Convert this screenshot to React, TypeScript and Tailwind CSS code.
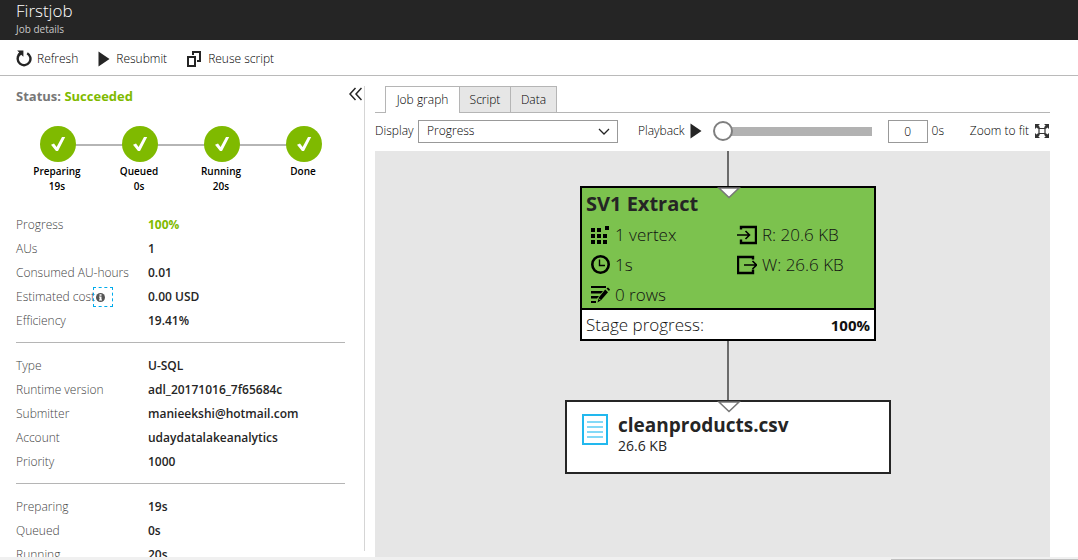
import type { ReactNode } from "react";

type Detail = { label: string; value: string; accent?: boolean; info?: boolean };

const stages = [
  { name: "Preparing", time: "19s" },
  { name: "Queued", time: "0s" },
  { name: "Running", time: "20s" },
  { name: "Done", time: "" },
];

const groups: Detail[][] = [
  [
    { label: "Progress", value: "100%", accent: true },
    { label: "AUs", value: "1" },
    { label: "Consumed AU-hours", value: "0.01" },
    { label: "Estimated cost", value: "0.00 USD", info: true },
    { label: "Efficiency", value: "19.41%" },
  ],
  [
    { label: "Type", value: "U-SQL" },
    { label: "Runtime version", value: "adl_20171016_7f65684c" },
    { label: "Submitter", value: "manieekshi@hotmail.com" },
    { label: "Account", value: "udaydatalakeanalytics" },
    { label: "Priority", value: "1000" },
  ],
  [
    { label: "Preparing", value: "19s" },
    { label: "Queued", value: "0s" },
    { label: "Running", value: "20s" },
  ],
];

function RefreshIcon() {
  return (
    <svg width="16" height="17" viewBox="0 0 16 17" fill="none" aria-hidden="true">
      <path d="M11.2 3.2A6.4 6.4 0 1 1 3.6 4.2" stroke="#252525" strokeWidth="2.4" />
      <path d="M1.2 0.600h6.200v6.200L5.200 4.800 3.200 6.300 1.400 4.600 3.200 2.600z" fill="#252525" />
    </svg>
  );
}

function PlayIcon() {
  return (
    <svg width="12" height="16" viewBox="0 0 12 16" aria-hidden="true">
      <path d="M0.500 0.500 11.500 8 0.500 15.500z" fill="#252525" />
    </svg>
  );
}

function CopyIcon() {
  return (
    <svg width="15" height="16" viewBox="0 0 15 16" fill="none" stroke="#252525" strokeWidth="2" aria-hidden="true">
      <path d="M1 6h7v9H1z" />
      <path d="M6 4V1h7v9h-3" />
    </svg>
  );
}

function FitIcon() {
  return (
    <svg width="14" height="14" viewBox="0 0 14 14" aria-hidden="true">
      <path d="M4 4.500h6v5H4z" fill="none" stroke="#333" strokeWidth="1.200" />
      <path d="M0 0h5L3.400 1.600 5 3.200 3.200 5 1.600 3.400 0 5zM14 0v5l-1.600-1.600L10.800 5 9 3.200l1.600-1.600L9 0zM0 14V9l1.600 1.600L3.200 9 5 10.800l-1.600 1.600L5 14zM14 14H9l1.600-1.600L9 10.800 10.800 9l1.600 1.600L14 9z" fill="#333" />
    </svg>
  );
}

function VertexIcon() {
  return (
    <svg width="20" height="20" viewBox="0 0 20 20" aria-hidden="true">
      <path d="M1 3h4v4H1zM7 3h4v4H7zM15 1h4v4h-4zM1 9h4v4H1zM7 9h4v4H7zM13 9h4v4h-4zM1 15h4v4H1zM7 15h4v4H7zM13 15h4v4h-4z" />
    </svg>
  );
}

function ClockIcon() {
  return (
    <svg width="20" height="20" viewBox="0 0 20 20" fill="none" stroke="#000" aria-hidden="true">
      <circle cx="10.500" cy="9.500" r="8.200" strokeWidth="2.600" />
      <path d="M9.500 4.500v6H15" strokeWidth="1.400" />
    </svg>
  );
}

function RowsIcon() {
  return (
    <svg width="20" height="20" viewBox="0 0 20 20" aria-hidden="true">
      <path d="M1 1h15v2H1zM1 6h12l-2 2.500H1zM1 11h8l-2 2.500H1zM1 16h5v2H1z" />
      <path d="M15.200 4.500 18 7.300 11 15.300 7.500 17.500 8.800 12.500zM16.500 3.500 18 2.500 20 4.500 19 6z" />
      <path d="M8.800 13.500 10.600 15.300" stroke="#7cc24e" />
    </svg>
  );
}

function ReadIcon() {
  return (
    <svg width="20" height="20" viewBox="0 0 20 20" fill="none" stroke="#000" aria-hidden="true">
      <path d="M4 4.500V2h15v16H4v-3.500" strokeWidth="2.400" />
      <path d="M0 10h12M8.500 6l4 4-4 4" strokeWidth="1.600" />
    </svg>
  );
}

function WriteIcon() {
  return (
    <svg width="20" height="20" viewBox="0 0 20 20" fill="none" stroke="#000" aria-hidden="true">
      <path d="M16 4.500V2H1v16h15v-3.500" strokeWidth="2.400" />
      <path d="M7 10h12M15.500 6l4 4-4 4" strokeWidth="1.600" />
    </svg>
  );
}

function FileIcon() {
  return (
    <svg width="26" height="31" viewBox="0 0 26 31" aria-hidden="true">
      <path d="M1 1h24v29H1z" fill="#fff" stroke="#22b8ee" strokeWidth="2" />
      <path d="M5 8h16M5 13h16M5 18h16M5 23h16" stroke="#84d9f7" strokeWidth="2" />
    </svg>
  );
}

function Connector({ className }: { className: string }) {
  return <div className={"w-[2px] bg-[#6b6b6b] " + className} />;
}

function Port() {
  return (
    <svg className="absolute -top-px left-1/2 -translate-x-[11px]" width="24" height="12" viewBox="0 0 24 12" aria-hidden="true">
      <path d="M2 1h20L12 10.500z" fill="#fff" stroke="#777" strokeWidth="1.500" />
    </svg>
  );
}

function Stat({ icon, children }: { icon: ReactNode; children: ReactNode }) {
  return (
    <div className="flex h-[30px] items-center gap-[5px]">
      {icon}
      <span>{children}</span>
    </div>
  );
}

function Toolbar() {
  return (
    <div className="flex h-9 shrink-0 items-center gap-5 border-b border-[#bababa] px-4 pt-[2px]">
      <button className="flex items-center gap-[5px]"><RefreshIcon />Refresh</button>
      <button className="flex items-center gap-[6px]"><PlayIcon />Resubmit</button>
      <button className="flex items-center gap-[6px]"><CopyIcon />Reuse script</button>
    </div>
  );
}

function Summary() {
  return (
    <section className="w-[365px] shrink-0 overflow-hidden">
      <div className="flex h-full pt-[10px] pb-[6px]">
        <div className="flex w-full items-start border-r border-[#d5d5d5]">
          <div className="h-full min-w-0 flex-1 pl-4">
            <h2 className="text-[13px] leading-5 font-bold text-[#777]">
              Status: <span className="text-[#7fba00]">Succeeded</span>
            </h2>
            <ol className="mt-5 flex pl-px">
              {stages.map((stage, i) => (
                <li key={stage.name} className="relative flex w-[82px] flex-col items-center">
                  {i < stages.length - 1 && (
                    <span className="absolute top-[18px] left-1/2 h-[2px] w-full bg-[#b5b5b5]" />
                  )}
                  <span className="relative flex size-9 items-center justify-center rounded-full bg-[#7fba00]">
                    <svg width="16" height="16" viewBox="0 0 16 16" aria-hidden="true">
                      <path d="M1 8.800 4 7.600 6.600 11 12 1h3.200L8 15H6z" fill="#fff" />
                    </svg>
                  </span>
                  <span className="mt-[2px] pr-[2px] text-[10px] leading-[15px] font-semibold">{stage.name}</span>
                  <span className="h-[15px] pr-[2px] text-[10px] leading-[15px] font-semibold">{stage.time}</span>
                </li>
              ))}
            </ol>
            {groups.map((rows, i) => (
              <dl key={i} className={i === 0 ? "mt-[19px]" : "mt-[9px] border-t border-[#b5b5b5] pt-[11px]"}>
                {rows.map((row) => (
                  <div key={row.label} className="flex h-6 items-center">
                    <dt className="flex w-[132px] items-center whitespace-nowrap text-[#444]">
                      {row.label}
                      {row.info && (
                        <button aria-label="About estimated cost" className="-ml-[2px] flex size-5 items-center border border-dashed border-[#00abec] pl-[2px]">
                          <svg width="9" height="9" viewBox="0 0 9 9" aria-hidden="true">
                            <circle cx="4.500" cy="4.500" r="4.500" fill="#555" />
                            <path d="M3.500 1.300h2v1.400h-2zM3 3.500h2.500v3H6v1H3v-1h.6v-2H3z" fill="#fff" />
                          </svg>
                        </button>
                      )}
                    </dt>
                    <dd className={row.accent ? "font-bold text-[#7fba00]" : "font-semibold text-[#252525]"}>{row.value}</dd>
                  </div>
                ))}
              </dl>
            ))}
          </div>
          <button aria-label="Collapse summary" className="mr-[2px] pt-px pl-1">
            <svg width="13" height="14" viewBox="0 0 13 14" fill="none" stroke="#252525" strokeWidth="1.500" aria-hidden="true">
              <path d="M6.500 1 1 7l5.500 6M12.500 1 7 7l5.500 6" />
            </svg>
          </button>
        </div>
      </div>
    </section>
  );
}

function GraphPanel() {
  return (
    <section className="flex min-w-0 flex-1 flex-col pt-[10px] pr-7 pl-[10px]">
      <div role="tablist" className="flex h-[27px] shrink-0 border-b border-[#b5b5b5] pl-[10px]">
        <button role="tab" aria-selected="true" className="-mb-px w-[75px] border border-b-0 border-[#b5b5b5] bg-white">Job graph</button>
        <button role="tab" aria-selected="false" className="w-[51px] border-t border-r border-[#b5b5b5] bg-[#e6e6e6]">Script</button>
        <button role="tab" aria-selected="false" className="w-[46px] border-t border-r border-[#b5b5b5] bg-[#e6e6e6]">Data</button>
      </div>
      <div className="flex h-[38px] shrink-0 items-center pb-[2px] whitespace-nowrap">
        <label htmlFor="display" className="w-[43px]">Display</label>
        <div className="relative">
          <select id="display" className="block h-[23px] w-[200px] appearance-none border border-[#999] bg-white px-2">
            <option>Progress</option>
          </select>
          <svg className="pointer-events-none absolute top-2 right-2" width="12" height="8" viewBox="0 0 12 8" fill="none" stroke="#252525" strokeWidth="1.300" aria-hidden="true">
            <path d="M1 1l5 5 5-5" />
          </svg>
        </div>
        <button className="ml-5 flex items-center gap-[5px]">Playback<PlayIcon /></button>
        <input
          type="range"
          aria-label="Playback position"
          min="0"
          max="20"
          defaultValue="0"
          className="ml-[11px] h-5 w-[159px] appearance-none bg-transparent [&::-webkit-slider-runnable-track]:h-[9px] [&::-webkit-slider-runnable-track]:bg-linear-to-r [&::-webkit-slider-runnable-track]:from-transparent [&::-webkit-slider-runnable-track]:from-[8px] [&::-webkit-slider-runnable-track]:to-[#b2b2b2] [&::-webkit-slider-runnable-track]:to-[8px] [&::-webkit-slider-thumb]:-mt-[6px] [&::-webkit-slider-thumb]:size-5 [&::-webkit-slider-thumb]:appearance-none [&::-webkit-slider-thumb]:rounded-full [&::-webkit-slider-thumb]:border-2 [&::-webkit-slider-thumb]:border-[#7f7f7f] [&::-webkit-slider-thumb]:bg-white"
        />
        <input aria-label="Playback seconds" defaultValue="0" className="ml-4 h-[23px] w-10 border border-[#999] text-center" />
        <span className="ml-1">0s</span>
        <button className="ml-auto flex items-center gap-[6px] pr-px">Zoom to fit<FitIcon /></button>
      </div>
      <div className="relative min-h-0 flex-1 overflow-hidden bg-[#e6e6e6]">
        <div className="absolute top-0 left-[190px] flex w-[326px] flex-col items-center">
          <Connector className="h-[35px]" />
          <article className="relative w-[296px] border-2 border-black bg-[#7cc24e] text-[#252525]">
            <Port />
            <h3 className="pl-1 text-[20px] leading-[32px] font-bold">SV1 Extract</h3>
            <div className="-mb-[2px] grid grid-cols-[147px_1fr] pl-2 text-[17px] leading-5 font-light text-[#111]">
              <Stat icon={<VertexIcon />}>1 vertex</Stat>
              <Stat icon={<ReadIcon />}>R: 20.6 KB</Stat>
              <Stat icon={<ClockIcon />}>1s</Stat>
              <Stat icon={<WriteIcon />}>W: 26.6 KB</Stat>
              <Stat icon={<RowsIcon />}>0 rows</Stat>
            </div>
            <div className="relative flex h-[31px] items-center justify-between border-t-2 border-black bg-white px-1 text-[17px] font-light text-[#111]">
              <span>Stage progress:</span>
              <span className="text-[15px] font-bold">100%</span>
            </div>
          </article>
          <Connector className="h-[59px]" />
          <article className="relative flex h-[74px] w-full gap-[10px] border-2 border-[#252525] bg-white pt-3 pl-[15px] text-[#252525]">
            <Port />
            <FileIcon />
            <div>
              <h3 className="text-[19px] leading-[22px] font-bold">cleanproducts.csv</h3>
              <p className="text-[14px] leading-[20px] font-normal">26.6 KB</p>
            </div>
          </article>
        </div>
      </div>
    </section>
  );
}

export default function App() {
  return (
    <div className="flex h-screen flex-col overflow-hidden bg-white font-['Open_Sans','Noto_Sans',sans-serif] text-[12px] leading-4 font-light text-black">
      <header className="h-10 shrink-0 bg-[#252525] px-4">
        <h1 className="text-[17px] leading-[22px] font-light text-white">Firstjob</h1>
        <p className="text-[10px] leading-[14px] font-normal text-[#c8c8c8]">Job details</p>
      </header>
      <Toolbar />
      <main className="flex min-h-0 flex-1">
        <Summary />
        <GraphPanel />
      </main>
      <div className="flex h-[3px] shrink-0 items-end justify-end bg-[#f0f0f0]">
        <div className="h-px w-[187px] bg-[#c0c0c0]" />
      </div>
    </div>
  );
}
